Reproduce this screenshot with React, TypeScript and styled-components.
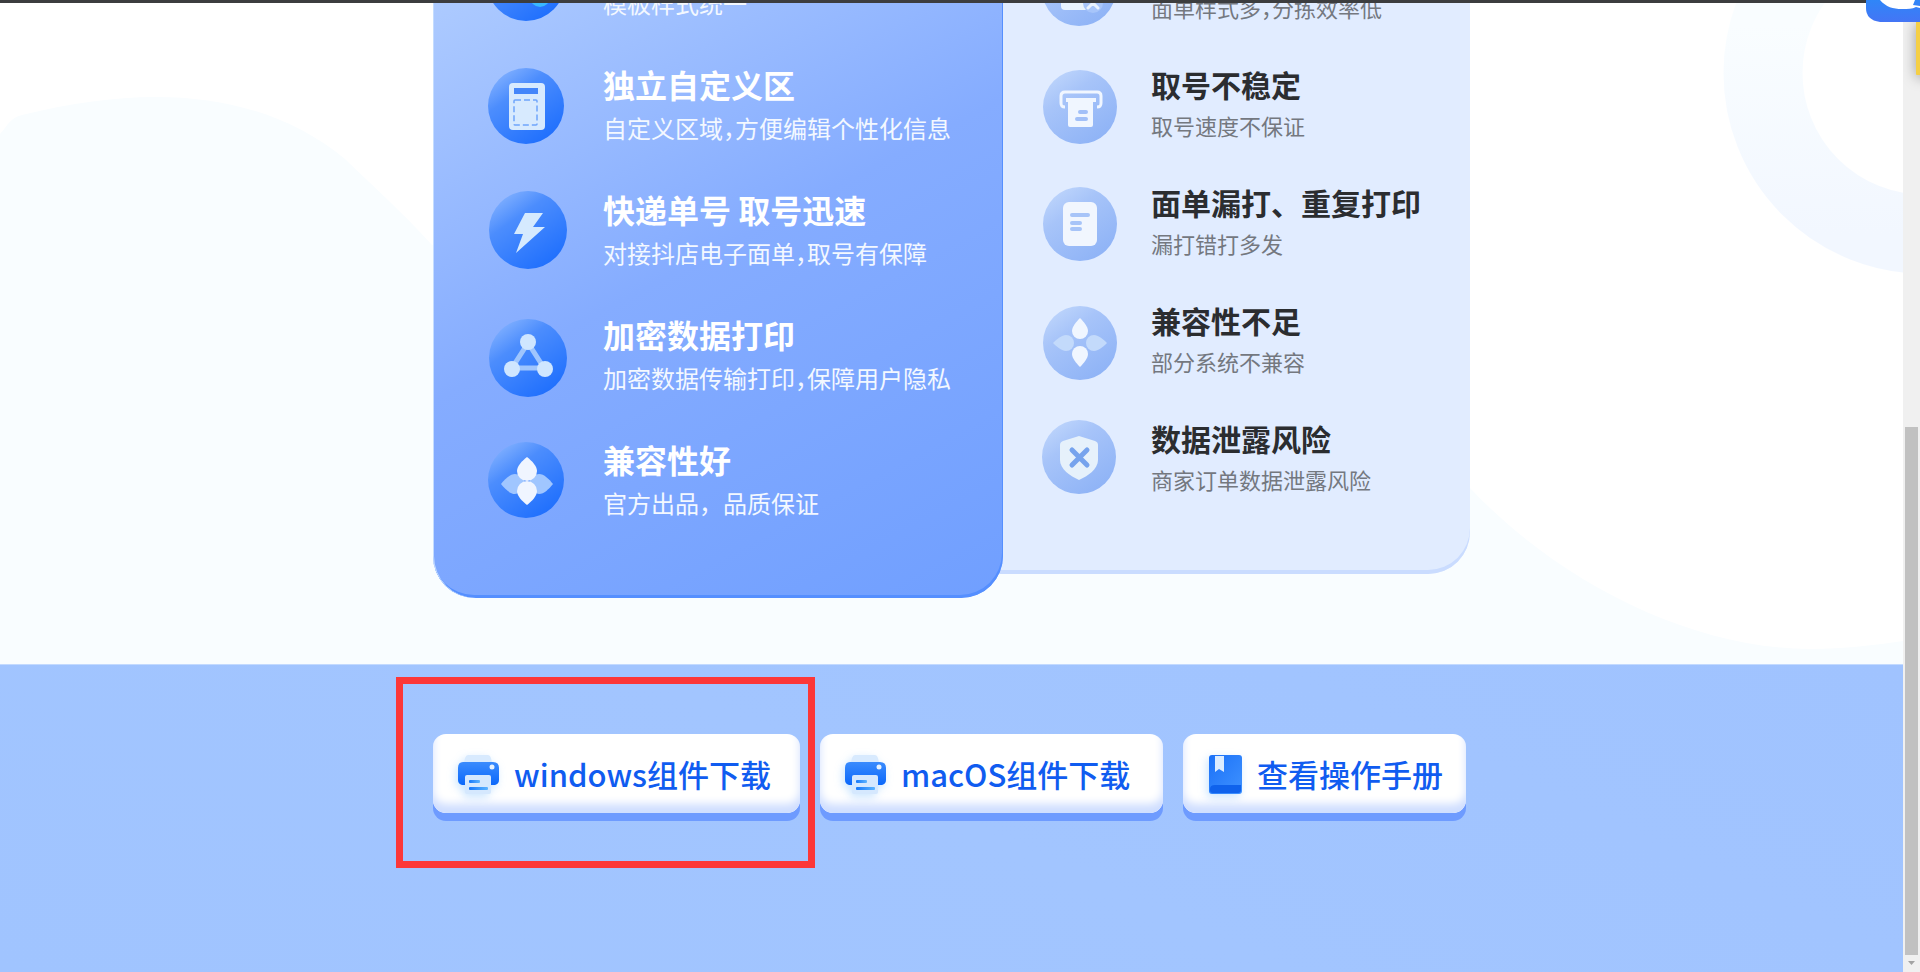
import React from "react";
import styled, { createGlobalStyle } from "styled-components";

const GlobalStyle = createGlobalStyle`
  *, *::before, *::after { box-sizing: border-box; }
  body {
    margin: 0;
    background: #fff;
    font-family: "Noto Sans CJK SC", "Noto Sans", sans-serif;
  }
`;

const Shell = styled.div`
  display: flex;
  height: 100vh;
  overflow: hidden;
  position: relative;
`;

const Page = styled.div`
  flex: 1;
  min-width: 0;
  display: flex;
  flex-direction: column;
  border-top: 3px solid #3c3d3f;
`;

const Hero = styled.main`
  position: relative;
  overflow: hidden;
  flex: none;
  display: flex;
  justify-content: center;
  padding-bottom: 66px;
  background: #fff;
`;

const Backdrop = styled.svg`
  position: absolute;
  inset: 0;
  width: 100%;
  height: 100%;
`;

const Compare = styled.div`
  position: relative;
  display: flex;
  align-items: flex-start;
  width: 1037px;
  margin-top: -64px;
`;

const GoodCard = styled.section`
  position: relative;
  z-index: 1;
  width: 570px;
  padding: 0 0 34px 51px;
  border-radius: 0 0 42px 42px;
  background: linear-gradient(152deg, #b3cfff 0%, #85acff 48%, #709fff 100%);
  box-shadow: inset 1px 0 0 #c4dcff, inset -1px -3px 0 #558fff;
`;

const PlainCard = styled.section`
  width: 509px;
  margin-left: -42px;
  padding: 8px 0 37px 78px;
  border-radius: 0 0 42px 0;
  background: #e1ecff;
  box-shadow: inset 0 -4px 0 #cadcff;
`;

const List = styled.ul`
  margin: 0;
  padding: 0;
  list-style: none;
`;

const Feature = styled.li<{ $good?: boolean }>`
  display: flex;
  gap: ${(p) => (p.$good ? 33 : 26)}px;
  height: ${(p) => (p.$good ? 125 : 118)}px;
`;

const Badge = styled.svg`
  flex: none;
  width: 86px;
  height: 96px;
`;

const Copy = styled.div`
  display: flex;
  flex-direction: column;
  min-width: 0;
  white-space: nowrap;
`;

const Title = styled.h3<{ $good?: boolean }>`
  margin: 0;
  height: ${(p) => (p.$good ? 40 : 38)}px;
  font-size: ${(p) => (p.$good ? 32 : 30)}px;
  line-height: ${(p) => (p.$good ? 40 : 38)}px;
  font-weight: 700;
  color: ${(p) => (p.$good ? "#fff" : "#2b2d30")};
`;

const Note = styled.p<{ $good?: boolean }>`
  margin: 0;
  font-size: ${(p) => (p.$good ? 24 : 22)}px;
  line-height: ${(p) => (p.$good ? 48 : 44)}px;
  font-weight: 400;
  color: ${(p) => (p.$good ? "#f3f8ff" : "#74787f")};
`;

const Comma = styled.span`
  font-feature-settings: "halt";
`;

const Downloads = styled.footer`
  flex: 1;
  display: flex;
  justify-content: center;
  align-items: flex-start;
  padding-top: 69px;
  border-top: 1px solid #c3daff;
  background: linear-gradient(205deg, #a0c3ff 0%, #a2c5ff 50%, #a0c4ff 100%);
`;

const Actions = styled.div`
  display: flex;
  gap: 20px;
  width: 1037px;
`;

const Slot = styled.div`
  position: relative;
`;

const Highlight = styled.div`
  position: absolute;
  inset: -57px -15px -55px -37px;
  border: 7px solid #fc3738;
  pointer-events: none;
`;

const Action = styled.button<{ $width: number }>`
  display: flex;
  align-items: center;
  gap: 14px;
  width: ${(p) => p.$width}px;
  height: 79px;
  padding: 0 0 0 24px;
  border: 0;
  border-radius: 13px;
  background: #fff;
  box-shadow: inset 0 -9px 8px #cfdeff, 0 8px 0 #6e9bff;
  color: #105cf0;
  font-family: inherit;
  font-size: 31px;
  line-height: 44px;
  font-weight: 500;
  white-space: nowrap;
  cursor: pointer;
`;

const ActionIcon = styled.svg`
  flex: none;
  height: 46px;
  overflow: visible;
  filter: drop-shadow(-2px 3px 4px rgba(80, 170, 255, 0.3));
`;

const ScrollTrack = styled.div`
  display: flex;
  flex-direction: column;
  align-items: center;
  width: 17px;
  background: #f0f0f0;
`;

const ScrollSpace = styled.div`
  flex: 427;
`;

const ScrollThumb = styled.div`
  flex: 528;
  width: 13px;
  background: #c1c1c1;
`;

const ScrollArrow = styled.svg`
  flex: none;
  width: 17px;
  height: 17px;
`;

const Sticker = styled.div`
  position: absolute;
  top: 0;
  right: 0;
  width: 17px;
  height: 100px;
  padding: 21px 0 0 13px;
  overflow: hidden;
`;

const StickerEdge = styled.div`
  width: 40px;
  height: 54px;
  border-radius: 1px;
  background: #f5cf45;
  box-shadow: 0 2px 14px rgba(0, 0, 0, 0.35);
`;

const ChatBubble = styled.svg`
  position: absolute;
  top: 0;
  right: 0;
  width: 54px;
  height: 22px;
`;

const widePetal = "M0 -24C5 -20 10 -15 10 -10A10 10 0 0 1 -10 -10C-10 -15 -5 -20 0 -24Z";
const slimPetal = "M0 -24C4 -20 8 -15 8 -11A8 8 0 0 1 -8 -11C-8 -15 -4 -20 0 -24Z";

type Kind =
  | "template" | "area" | "bolt" | "nodes" | "flower"
  | "mixed" | "printer" | "sheet" | "flowerOpen" | "shield";

/* Artwork is drawn around the centre of its disc. */
const art: Record<Kind, React.ReactNode> = {
  template: (
    <>
      <rect x="-16" y="-16" width="26" height="36" rx="4" fill="#dcebff" />
      <circle cx="14" cy="15" r="10" fill="#39b8ff" />
    </>
  ),
  area: (
    <>
      <rect x="-17" y="-23" width="36" height="47" rx="4" fill="#d7eafe" />
      <rect x="-12" y="-18" width="24" height="6" fill="#4486fa" />
      <rect x="-12" y="-6" width="23" height="25" rx="1" fill="none" stroke="#6fa5fb" strokeWidth="1.5" strokeDasharray="6 3" />
    </>
  ),
  bolt: <path d="M-3 -17H15L5 -3H17L-12 23L-5 4H-14Z" fill="#d5eafe" />,
  nodes: (
    <>
      <path d="M0 -15L-16 10H16Z" fill="none" stroke="#9fc5fd" strokeWidth="5" />
      <circle cx="0" cy="-16" r="8" fill="#cfe6ff" />
      <circle cx="-16" cy="11" r="8" fill="#cfe6ff" />
      <circle cx="17" cy="11" r="8" fill="#cfe6ff" />
    </>
  ),
  flower: (
    <g transform="translate(1 1)">
      <g fill="#a0c6ff" transform="translate(0 3)">
        <path d={widePetal} transform="rotate(90)translate(0 -2)" />
        <path d={widePetal} transform="rotate(-90)translate(0 -2)" />
      </g>
      <g fill="#f0f5ff">
        <path d={widePetal} />
        <path d={widePetal} transform="rotate(180)" />
      </g>
    </g>
  ),
  mixed: (
    <>
      <rect x="-18" y="-12" width="28" height="33" rx="4" fill="#eaf4ff" />
      <circle cx="14" cy="14" r="10" fill="#a7c5fa" />
      <path d="M9 9L19 19M19 9L9 19" stroke="#eaf3ff" strokeWidth="3" strokeLinecap="round" />
    </>
  ),
  printer: (
    <>
      <path d="M-15 0C-18 0 -19 -1 -19 -4V-11Q-19 -15 -15 -15H17Q21 -15 21 -11V-4C21 -1 20 0 17 0" fill="none" stroke="#f0f6ff" strokeWidth="3" />
      <path d="M-14 -9H16V-5H13V18Q13 20 11 20H-10Q-12 20 -12 18V-5H-14Z" fill="#f0f6ff" />
      <path d="M0 5H6M-3 12H6" stroke="#a2c0f8" strokeWidth="4" strokeLinecap="round" />
    </>
  ),
  sheet: (
    <>
      <rect x="-17" y="-22" width="34" height="44" rx="6" fill="#f1f6fe" />
      <path d="M-8 -9H8M-8 -1H0M-8 5H0" stroke="#a7c4f8" strokeWidth="4" strokeLinecap="round" />
    </>
  ),
  flowerOpen: (
    <>
      <g fill="#c3dafb">
        <path d={slimPetal} transform="rotate(90)translate(0 -3)" />
        <path d={slimPetal} transform="rotate(-90)translate(0 -3)" />
      </g>
      <g fill="#f0f6ff">
        <path d={slimPetal} transform="translate(0 -1)" />
        <path d={slimPetal} transform="rotate(180)" />
      </g>
    </>
  ),
  shield: (
    <>
      <path d="M0 -21L16 -16Q19 -15 19 -12V3C19 12 9 19 0 23C-9 19 -19 12 -19 3V-12Q-19 -15 -16 -16Z" fill="#e6f1fb" />
      <path d="M-7 -7L8 8M8 -7L-7 8" stroke="#76a3ed" strokeWidth="5" strokeLinecap="round" />
    </>
  ),
};

type Item = { kind: Kind; cx: number; cy: number; r: number; title?: string; note: React.ReactNode };

const narrow = (a: string, b: string) => (
  <>{a}<Comma>，</Comma>{b}</>
);

const goodItems: Item[] = [
  { kind: "template", cx: 42, cy: 43, r: 39, note: "模板样式统一" },
  { kind: "area", cx: 42, cy: 42, r: 38, title: "独立自定义区", note: narrow("自定义区域", "方便编辑个性化信息") },
  { kind: "bolt", cx: 44, cy: 41, r: 39, title: "快递单号 取号迅速", note: narrow("对接抖店电子面单", "取号有保障") },
  { kind: "nodes", cx: 44, cy: 44, r: 39, title: "加密数据打印", note: narrow("加密数据传输打印", "保障用户隐私") },
  { kind: "flower", cx: 42, cy: 41, r: 38, title: "兼容性好", note: "官方出品，品质保证" },
];

const plainItems: Item[] = [
  { kind: "mixed", cx: 40, cy: 42, r: 37, note: narrow("面单样式多", "分拣效率低") },
  { kind: "printer", cx: 41, cy: 42, r: 37, title: "取号不稳定", note: "取号速度不保证" },
  { kind: "sheet", cx: 41, cy: 41, r: 37, title: "面单漏打、重复打印", note: "漏打错打多发" },
  { kind: "flowerOpen", cx: 41, cy: 42, r: 37, title: "兼容性不足", note: "部分系统不兼容" },
  { kind: "shield", cx: 40, cy: 38, r: 37, title: "数据泄露风险", note: "商家订单数据泄露风险" },
];

function FeatureRow({ item, good }: { item: Item; good?: boolean }) {
  return (
    <Feature $good={good}>
      <Badge viewBox="0 0 86 96" aria-hidden="true">
        <circle cx={item.cx} cy={item.cy} r={item.r} fill={good ? "url(#discGood)" : "url(#discPlain)"} />
        <g transform={`translate(${item.cx} ${item.cy})`}>{art[item.kind]}</g>
      </Badge>
      <Copy>
        <Title $good={good}>{item.title}</Title>
        <Note $good={good}>{item.note}</Note>
      </Copy>
    </Feature>
  );
}

function PrinterIcon() {
  return (
    <ActionIcon width="43" viewBox="0 0 43 46" aria-hidden="true">
      <path d="M11 4H31Q33 4 34 7L35 12H7L8 7Q9 4 11 4Z" fill="#d8eafe" />
      <path d="M6 11H36Q42 11 42 17V29Q42 33 38 34H5Q1 33 1 29V17Q1 11 6 11Z" fill="url(#inkBlue)" />
      <path d="M10 24H32Q34 24 34 26V41Q34 43 32 43H10Q8 43 8 41V26Q8 24 10 24Z" fill="#d5e8fe" />
      <circle cx="35" cy="16" r="2.500" fill="#e6f2ff" />
      <rect x="12" y="29" width="11" height="3" rx="1" fill="url(#lineBlue)" />
      <rect x="12" y="36" width="19" height="3" rx="1" fill="url(#lineBlue)" />
    </ActionIcon>
  );
}

function BookIcon() {
  return (
    <ActionIcon width="36" viewBox="0 0 36 46" aria-hidden="true">
      <rect x="2" y="4" width="33" height="39" rx="3" fill="url(#bookBlue)" />
      <path d="M3 38Q3 34 8 34H34V39Q34 42 31 42H6Q3 42 3 39Z" fill="#0f62ec" />
      <path d="M8 5H17V21L12 18L8 21Z" fill="#dcecff" />
    </ActionIcon>
  );
}

function Gradients() {
  return (
    <defs>
      <linearGradient id="discGood" x1="0.1" y1="0" x2="0.8" y2="1">
        <stop offset="0" stopColor="#8db8ff" />
        <stop offset="0.35" stopColor="#4c8dfd" />
        <stop offset="1" stopColor="#1c6dfd" />
      </linearGradient>
      <linearGradient id="discPlain" x1="0.1" y1="0" x2="0.8" y2="1">
        <stop offset="0" stopColor="#c2d8fc" />
        <stop offset="0.35" stopColor="#a7c4f9" />
        <stop offset="1" stopColor="#8db2f6" />
      </linearGradient>
      <linearGradient id="inkBlue" x1="0" y1="0" x2="0" y2="1">
        <stop offset="0" stopColor="#3a8bfd" />
        <stop offset="1" stopColor="#0b68fb" />
      </linearGradient>
      <linearGradient id="lineBlue" x1="0" y1="0" x2="1" y2="0">
        <stop offset="0" stopColor="#1678fb" />
        <stop offset="1" stopColor="#5db4ff" />
      </linearGradient>
      <linearGradient id="bookBlue" x1="0" y1="0" x2="1" y2="1">
        <stop offset="0" stopColor="#1b71f8" />
        <stop offset="1" stopColor="#3f92ff" />
      </linearGradient>
      <linearGradient id="ring" x1="0" y1="0" x2="0" y2="1">
        <stop offset="0.35" stopColor="#f9fdff" />
        <stop offset="1" stopColor="#f2f7ff" />
      </linearGradient>
    </defs>
  );
}

export default function App() {
  return (
    <>
      <GlobalStyle />
      <Shell>
        <Page>
          <Hero>
            <Backdrop viewBox="0 0 1903 661" preserveAspectRatio="none" aria-hidden="true">
              <Gradients />
              <path d="M0 131C8 122 10 115 22 112C150 80 262 88 345 156C372 182 405 212 432 242L1470 485C1560 580 1690 645 1810 646C1845 646 1875 642 1903 638V661H0Z" fill="#f9fdff" />
              <circle cx="1924" cy="70" r="161" fill="none" stroke="url(#ring)" strokeWidth="79" />
            </Backdrop>
            <Compare>
              <GoodCard>
                <List>
                  {goodItems.map((it) => <FeatureRow key={it.kind} item={it} good />)}
                </List>
              </GoodCard>
              <PlainCard>
                <List>
                  {plainItems.map((it) => <FeatureRow key={it.kind} item={it} />)}
                </List>
              </PlainCard>
            </Compare>
          </Hero>
          <Downloads>
            <Actions>
              <Slot>
                <Action type="button" $width={367}><PrinterIcon />windows组件下载</Action>
                <Highlight />
              </Slot>
              <Slot>
                <Action type="button" $width={343}><PrinterIcon />macOS组件下载</Action>
              </Slot>
              <Slot>
                <Action type="button" $width={283}><BookIcon />查看操作手册</Action>
              </Slot>
            </Actions>
          </Downloads>
        </Page>
        <ScrollTrack aria-hidden="true">
          <ScrollSpace />
          <ScrollThumb />
          <ScrollArrow viewBox="0 0 17 17"><path d="M5 6H12L8.500 10Z" fill="#a3a3a3" /></ScrollArrow>
        </ScrollTrack>
        <Sticker aria-hidden="true"><StickerEdge /></Sticker>
        <ChatBubble viewBox="0 0 54 22" aria-hidden="true">
          <defs>
            <linearGradient id="chat" x1="0" y1="0" x2="0" y2="1">
              <stop offset="0" stopColor="#2f86f8" />
              <stop offset="1" stopColor="#4475f5" />
            </linearGradient>
          </defs>
          <path d="M0 0H54V22H14Q0 20 0 8Z" fill="url(#chat)" />
          <path d="M14 0C20 7 27 9 36 9C42 9 46 9 50 7L54 8V6L47 5L49 0Z" fill="#fff" />
        </ChatBubble>
      </Shell>
    </>
  );
}
